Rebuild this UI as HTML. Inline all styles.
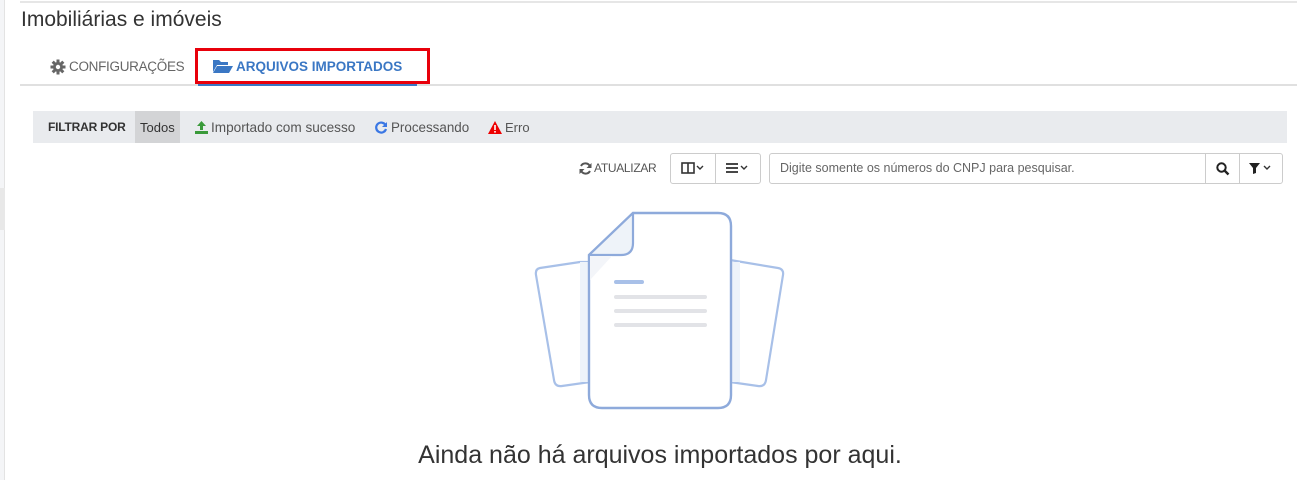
<!DOCTYPE html>
<html><head><meta charset="utf-8"><style>
*{box-sizing:border-box;margin:0;padding:0}
body{width:1297px;height:480px;background:#fff;font-family:"Liberation Sans",sans-serif;position:relative;overflow:hidden;color:#333}
.a{position:absolute}
</style></head><body>
<div class="a" style="left:0;top:0;width:5px;height:480px;background:#f4f5f7;border-right:1px solid #e3e3e3"></div>
<div class="a" style="left:0;top:188px;width:5px;height:42px;background:#e8e8e8"></div>
<div class="a" style="left:20px;top:1px;width:1277px;height:2px;background:#e6e6e6"></div>
<div class="a" style="left:21px;top:8px;font-size:21px;color:#333">Imobiliárias e imóveis</div>

<div class="a" style="left:20px;top:84px;width:1277px;height:2px;background:#e0e0e0"></div>
<div class="a" style="left:198px;top:83px;width:219px;height:3px;background:#3a77c4"></div>
<div class="a" style="left:195px;top:48px;width:235px;height:36px;border:3px solid #e8000b"></div>
<svg class="a" style="left:50px;top:59px" width="16" height="16" viewBox="0 0 16 16"><g fill="#666"><circle cx="8" cy="8" r="5"/><rect x="6.5" y="0.5" width="3" height="15"/><rect x="0.5" y="6.5" width="15" height="3"/><rect x="6.5" y="0.5" width="3" height="15" transform="rotate(45 8 8)"/><rect x="6.5" y="0.5" width="3" height="15" transform="rotate(-45 8 8)"/></g><circle cx="8" cy="8" r="2.2" fill="#fff"/></svg>
<div class="a" style="left:69px;top:59px;font-size:13.5px;color:#666;letter-spacing:-0.3px">CONFIGURAÇÕES</div>
<svg class="a" style="left:212px;top:58px" width="21" height="16" viewBox="0 0 21 16"><path d="M1 2h6l2 2h7v3H5L1 14z" fill="#3a77c4"/><path d="M5 8h16l-4 7H1z" fill="#3a77c4"/></svg>
<div class="a" style="left:236px;top:59px;font-size:13.5px;font-weight:bold;color:#3a77c4">ARQUIVOS IMPORTADOS</div>

<div class="a" style="left:33px;top:111px;width:1254px;height:32px;background:#e9ebee"></div>
<div class="a" style="left:135px;top:111px;width:45px;height:32px;background:#d3d4d6"></div>
<div class="a" style="left:48px;top:120px;font-size:12px;font-weight:bold;color:#333;letter-spacing:-0.2px">FILTRAR POR</div>
<div class="a" style="left:140px;top:120px;font-size:13px;color:#333">Todos</div>
<svg class="a" style="left:195px;top:121px" width="13" height="13" viewBox="0 0 13 13"><path d="M6.5 0L11 5H8v4H5V5H2z" fill="#3a9a3a"/><rect x="0" y="10" width="13" height="3" fill="#3a9a3a"/></svg>
<div class="a" style="left:211px;top:120px;font-size:13.6px;color:#555">Importado com sucesso</div>
<svg class="a" style="left:375px;top:121px" width="13" height="13" viewBox="0 0 13 13"><path d="M10.5 4A5 5 0 1 0 11 8" stroke="#3a77e4" stroke-width="2.2" fill="none"/><path d="M12 1v5H7z" fill="#3a77e4"/></svg>
<div class="a" style="left:391px;top:120px;font-size:13.4px;color:#555">Processando</div>
<svg class="a" style="left:488px;top:121px" width="14" height="13" viewBox="0 0 14 13"><path d="M7 0L14 13H0z" fill="#e00"/><rect x="6.2" y="4" width="1.6" height="5" fill="#fff"/><rect x="6.2" y="10" width="1.6" height="1.6" fill="#fff"/></svg>
<div class="a" style="left:505px;top:120px;font-size:13px;color:#555">Erro</div>

<svg class="a" style="left:579px;top:162px" width="13" height="13" viewBox="0 0 13 13"><path d="M11 4.5A5 5 0 0 0 2 4M2 8.5A5 5 0 0 0 11 9" stroke="#555" stroke-width="2" fill="none"/><path d="M12.5 1v5h-5zM0.5 12V7h5z" fill="#555"/></svg>
<div class="a" style="left:594px;top:161px;font-size:12px;color:#555;letter-spacing:-0.3px">ATUALIZAR</div>
<div class="a" style="left:670px;top:153px;width:91px;height:31px;border:1px solid #ccc;border-radius:3px"></div>
<div class="a" style="left:715px;top:153px;width:1px;height:31px;background:#ccc"></div>
<svg class="a" style="left:681px;top:162px" width="26" height="12" viewBox="0 0 26 12"><rect x="1" y="1" width="12" height="10" fill="none" stroke="#333" stroke-width="1.6"/><line x1="7" y1="1" x2="7" y2="11" stroke="#333" stroke-width="1.6"/><path d="M16 4l3 3 3-3" stroke="#333" stroke-width="1.4" fill="none"/></svg>
<svg class="a" style="left:726px;top:162px" width="26" height="12" viewBox="0 0 26 12"><g stroke="#333" stroke-width="1.8"><line x1="0" y1="2" x2="12" y2="2"/><line x1="0" y1="6" x2="12" y2="6"/><line x1="0" y1="10" x2="12" y2="10"/></g><path d="M15 4l3 3 3-3" stroke="#333" stroke-width="1.4" fill="none"/></svg>
<div class="a" style="left:769px;top:153px;width:514px;height:31px;border:1px solid #ccc;border-radius:3px"></div>
<div class="a" style="left:1205px;top:153px;width:1px;height:31px;background:#ccc"></div>
<div class="a" style="left:1239px;top:153px;width:1px;height:31px;background:#ccc"></div>
<div class="a" style="left:780px;top:161px;font-size:12.5px;color:#666">Digite somente os números do CNPJ para pesquisar.</div>
<svg class="a" style="left:1216px;top:162px" width="14" height="14" viewBox="0 0 14 14"><circle cx="5.5" cy="5.5" r="4.2" stroke="#222" stroke-width="2" fill="none"/><line x1="8.5" y1="8.5" x2="12.5" y2="12.5" stroke="#222" stroke-width="2.4"/></svg>
<svg class="a" style="left:1249px;top:162px" width="26" height="12" viewBox="0 0 26 12"><path d="M0 1h11L7 6v5L4 12V6z" fill="#222"/><path d="M15 4l3 3 3-3" stroke="#333" stroke-width="1.4" fill="none"/></svg>

<svg class="a" style="left:520px;top:200px" width="280" height="220" viewBox="0 0 280 220">
<path d="M60 62L20 68Q15 69 16 75L34 180Q35 187 42 186L70 182V62z" fill="#fff" stroke="#a8c0e8" stroke-width="2.2"/>
<rect x="60" y="62" width="10" height="120" fill="#edf3fa"/>
<path d="M210 60L258 68Q264 69 263 75L246 180Q245 187 238 186L210 182z" fill="#fff" stroke="#a8c0e8" stroke-width="2.2"/>
<rect x="210" y="62" width="10" height="120" fill="#edf3fa"/>
<path d="M113 13H198Q211 13 211 26V195Q211 208 198 208H82Q69 208 69 195V55z" fill="#fff" stroke="#8eaadb" stroke-width="2.4"/>
<path d="M69 55L113 13V43Q113 55 101 55z" fill="#eef3f9" stroke="#8eaadb" stroke-width="2.2" stroke-linejoin="round"/>
<path d="M70 56H92L70 80z" fill="#f3f5f9"/>
<line x1="96" y1="82" x2="122" y2="82" stroke="#a8c0e8" stroke-width="4" stroke-linecap="round"/>
<g stroke="#e2e3e7" stroke-width="4" stroke-linecap="round"><line x1="96" y1="97" x2="185" y2="97"/><line x1="96" y1="111" x2="185" y2="111"/><line x1="96" y1="125" x2="185" y2="125"/></g>
</svg>
<div class="a" style="left:0;width:1320px;top:441px;text-align:center;font-size:25px;color:#333">Ainda não há arquivos importados por aqui.</div>
</body></html>
